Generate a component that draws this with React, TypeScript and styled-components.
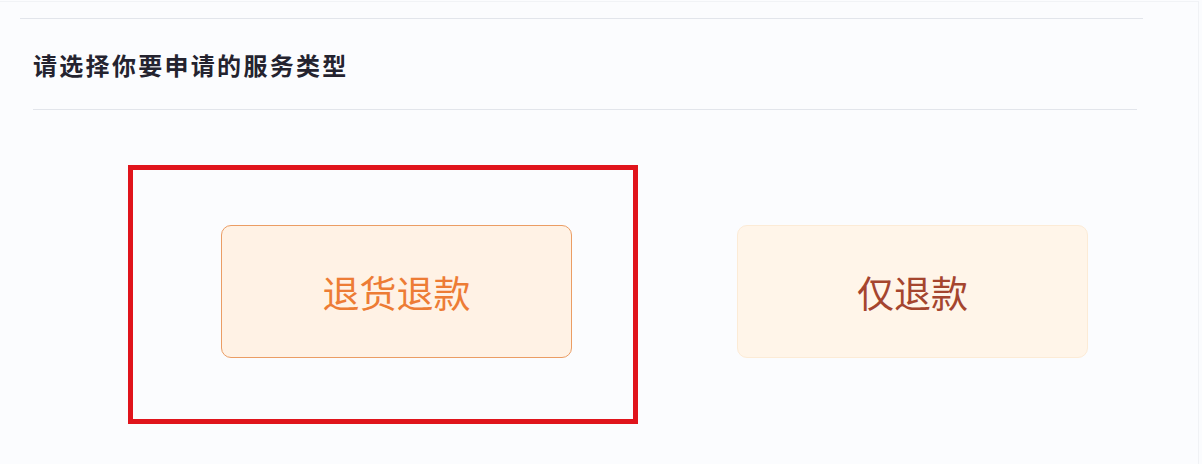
import React from 'react';
import styled, { createGlobalStyle } from 'styled-components';

const GlobalStyle = createGlobalStyle`
    html, body {
        margin: 0;
        padding: 0;
        background: #fbfcfe;
    }
    body {
        font-family: "Noto Sans CJK SC", "Noto Sans", sans-serif;
    }
`;

type ServiceOption = {
    key: string;
    label: string;
    active?: boolean;
};

const options: ServiceOption[] = [
    { key: 'return-refund', label: '退货退款', active: true },
    { key: 'refund-only', label: '仅退款' },
];

export default function App() {
    return (
        <>
            <GlobalStyle />
            <Page>
                <Frame>
                    <TopRule />
                    <Section>
                        <Header>
                            <Title>请选择你要申请的服务类型</Title>
                        </Header>
                        <Rule />
                        <Options>
                            {options.map((opt) => (
                                <OptionSlot key={opt.key}>
                                    <OptionButton type="button" $active={opt.active}>
                                        {opt.label}
                                    </OptionButton>
                                    {opt.active && <Highlight />}
                                </OptionSlot>
                            ))}
                        </Options>
                    </Section>
                </Frame>
            </Page>
        </>
    );
}

const Page = styled.div`
    width: 1202px;
    height: 464px;
    background: #fbfcfe;
    overflow: hidden;
`;

const Frame = styled.div`
    box-sizing: border-box;
    width: 1199px;
    height: 464px;
    margin-top: 1px;
    padding-top: 16px;
    border-top: 1px solid #f1f3f6;
    border-right: 1px solid #f0f2f5;
`;

const TopRule = styled.div`
    margin-left: 20px;
    width: 1123px;
    height: 1px;
    background: #e2e5eb;
`;

const Section = styled.div`
    padding: 0 61px 0 33px;
`;

const Header = styled.div`
    height: 90px;
    display: flex;
    align-items: center;
    padding-top: 2px;
    box-sizing: border-box;
`;

const Title = styled.h2`
    margin: 0;
    font-size: 24px;
    font-weight: 700;
    letter-spacing: 2.3px;
    color: #24232f;
    line-height: 1;
`;

const Rule = styled.div`
    height: 1px;
    background: #e2e5eb;
`;

const Options = styled.div`
    display: flex;
    gap: 165px;
    padding: 115px 0 0 188px;
`;

const OptionSlot = styled.div`
    position: relative;
`;

const OptionButton = styled.button<{ $active?: boolean }>`
    box-sizing: border-box;
    width: 351px;
    height: 133px;
    display: flex;
    align-items: center;
    justify-content: center;
    border-radius: 10px;
    border: 1px solid ${(p) => (p.$active ? '#eb9d64' : '#fcebd6')};
    background: ${(p) => (p.$active ? '#fff2e5' : '#fff5e9')};
    color: ${(p) => (p.$active ? '#ed7c35' : '#a5452e')};
    font-family: "Noto Sans CJK SC", "Noto Sans", sans-serif;
    font-size: 37px;
    font-weight: 400;
    cursor: pointer;
`;

const Highlight = styled.div`
    position: absolute;
    top: -60px;
    left: -93px;
    width: 510px;
    height: 259px;
    box-sizing: border-box;
    border: 5px solid #e0141c;
    pointer-events: none;
`;
